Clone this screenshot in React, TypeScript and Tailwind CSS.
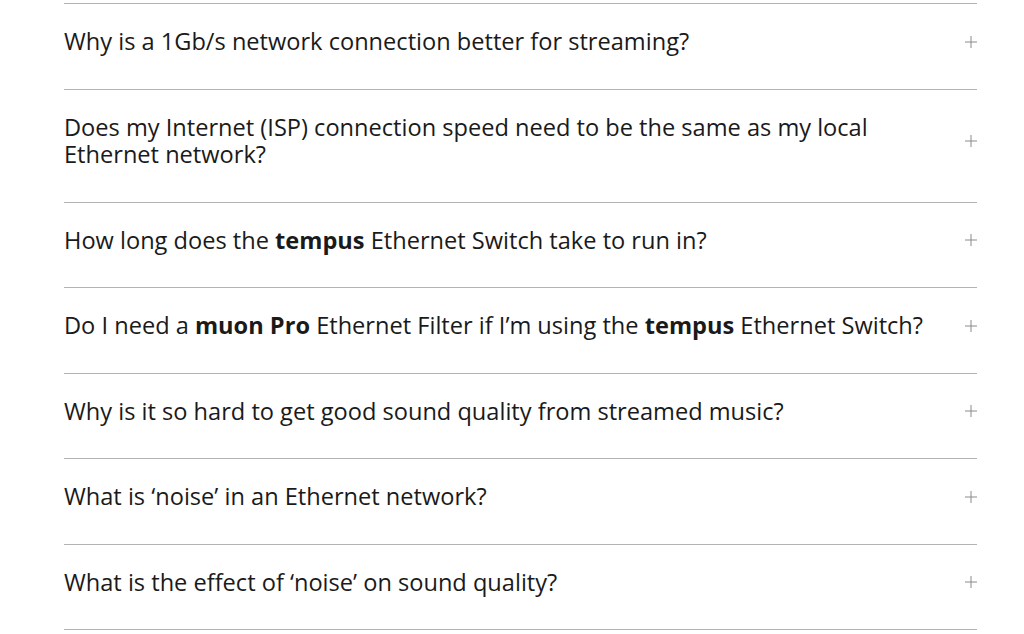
import type { ReactNode } from 'react'

const faqs: ReactNode[] = [
  <>Why is a 1Gb/s network connection better for streaming?</>,
  <>Does my Internet (ISP) connection speed need to be the same as my local Ethernet network?</>,
  <>
    How long does the <b>tempus</b> Ethernet Switch take to run in?
  </>,
  <>
    Do I need a <b>muon Pro</b> Ethernet Filter if I’m using the <b>tempus</b> Ethernet Switch?
  </>,
  <>Why is it so hard to get good sound quality from streamed music?</>,
  <>What is ‘noise’ in an Ethernet network?</>,
  <>What is the effect of ‘noise’ on sound quality?</>,
]

function Plus() {
  return (
    <svg width="12" height="12" viewBox="0 0 12 12" className="shrink-0">
      <path d="M6 0v12M0 6h12" stroke="#8a8a8a" strokeWidth="1" />
    </svg>
  )
}

export default function App() {
  return (
    <div className="min-h-screen bg-white pt-[3px]" style={{ fontFamily: '"Open Sans", sans-serif' }}>
      <div className="ml-16 w-[913px] border-t border-[#b4b4b4]">
        {faqs.map((q, i) => (
          <div
            key={i}
            className="flex items-center justify-between border-b border-[#b4b4b4] pt-6 pb-[33px]"
          >
            <p className="max-w-[872px] text-[23.6px] leading-[27.5px] text-[#1a1a1a]">{q}</p>
            <Plus />
          </div>
        ))}
      </div>
    </div>
  )
}
